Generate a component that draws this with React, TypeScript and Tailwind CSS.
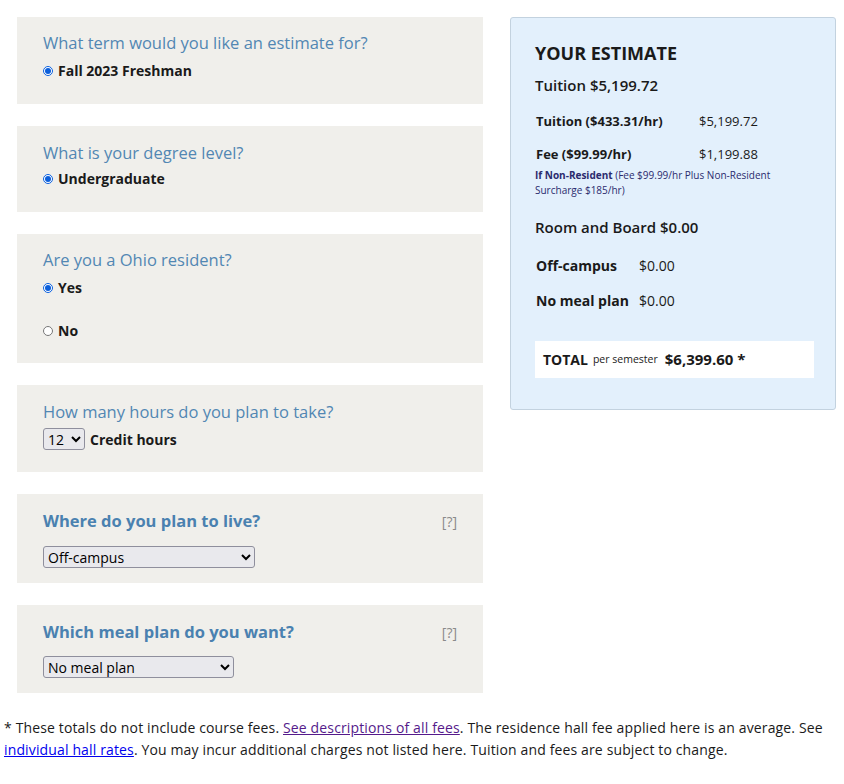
import React from "react";

function Radio({ checked }: { checked?: boolean }) {
  return (
    <input
      type="radio"
      readOnly
      checked={!!checked}
      className="m-0 mr-[5px] h-[10px] w-[10px] accent-[#0b5fdb]"
    />
  );
}

function Box({ children, className = "" }: { children: React.ReactNode; className?: string }) {
  return <div className={"bg-[#f0efeb] pl-[26px] pr-[26px] " + className}>{children}</div>;
}

export default function App() {
  return (
    <div className="w-[844px] h-[784px] bg-white text-[#1a1a1a]" style={{ fontFamily: '"Open Sans", sans-serif' }}>
      <div className="flex pt-[17px] pl-[17px]">
        <div className="w-[466px] flex flex-col gap-[22px]">
          <Box className="h-[87px] pt-[14px]">
            <div className="text-[16.5px] leading-[24px] text-[#5287b3]">What term would you like an estimate for?</div>
            <label className="flex items-center text-[14px] font-bold leading-[20px] mt-[6px]">
              <Radio checked />Fall 2023 Freshman
            </label>
          </Box>
          <Box className="h-[86px] pt-[15px]">
            <div className="text-[16.5px] leading-[24px] text-[#5287b3]">What is your degree level?</div>
            <label className="flex items-center text-[14px] font-bold leading-[20px] mt-[4px]">
              <Radio checked />Undergraduate
            </label>
          </Box>
          <Box className="h-[129px] pt-[14px]">
            <div className="text-[16.5px] leading-[24px] text-[#5287b3]">Are you a Ohio resident?</div>
            <label className="flex items-center text-[14px] font-bold leading-[20px] mt-[6px]">
              <Radio checked />Yes
            </label>
            <label className="flex items-center text-[14px] font-bold leading-[20px] mt-[23px]">
              <Radio />No
            </label>
          </Box>
          <Box className="h-[87px] pt-[15px]">
            <div className="text-[16.5px] leading-[24px] text-[#5287b3]">How many hours do you plan to take?</div>
            <div className="flex items-center mt-[4px]">
              <select
                defaultValue="12"
                className="h-[22px] w-[42px] bg-[#e9e9ed] border border-[#8f8f9d] rounded-[3px] text-[14px] text-black"
              >
                <option value="12">12</option>
              </select>
              <span className="ml-[5px] text-[14px] font-bold">Credit hours</span>
            </div>
          </Box>
          <Box className="h-[89px] pt-[15px]">
            <div className="flex justify-between items-center">
              <div className="text-[16.5px] leading-[24px] font-bold text-[#4a81b0]">Where do you plan to live?</div>
              <div className="text-[14px] text-[#8a8a8a]">[?]</div>
            </div>
            <select
              defaultValue="off"
              className="mt-[13px] h-[22px] w-[212px] bg-[#e9e9ed] border border-[#8f8f9d] rounded-[3px] text-[14px] text-black"
            >
              <option value="off">Off-campus</option>
            </select>
          </Box>
          <Box className="h-[88px] pt-[15px]">
            <div className="flex justify-between items-center">
              <div className="text-[16.5px] leading-[24px] font-bold text-[#4a81b0]">Which meal plan do you want?</div>
              <div className="text-[14px] text-[#8a8a8a]">[?]</div>
            </div>
            <select
              defaultValue="none"
              className="mt-[12px] h-[22px] w-[191px] bg-[#e9e9ed] border border-[#8f8f9d] rounded-[3px] text-[14px] text-black"
            >
              <option value="none">No meal plan</option>
            </select>
          </Box>
        </div>
        <div className="ml-[27px] w-[326px] h-[393px] bg-[#e3f0fc] border border-[#c3d2df] rounded-[3px] pl-[24px] pr-[21px] pt-[23px]">
          <div className="text-[18px] leading-[24px] font-bold text-[#1a1a1a]">YOUR ESTIMATE</div>
          <div className="mt-[10px] text-[15px] leading-[20px] font-semibold">Tuition $5,199.72</div>
          <div className="mt-[17px] flex text-[13px] leading-[18px]">
            <span className="w-[164px] font-bold pl-[1px]">Tuition ($433.31/hr)</span>
            <span>$5,199.72</span>
          </div>
          <div className="mt-[15px] flex text-[13px] leading-[18px]">
            <span className="w-[164px] font-bold pl-[1px]">Fee ($99.99/hr)</span>
            <span>$1,199.88</span>
          </div>
          <div className="mt-[5px] text-[10px] leading-[15px] text-[#2b2b6e] pr-[40px]">
            <span className="font-bold">If Non-Resident</span> (Fee $99.99/hr Plus Non-Resident Surcharge $185/hr)
          </div>
          <div className="mt-[19px] text-[15px] leading-[20px] font-semibold">Room and Board $0.00</div>
          <div className="mt-[19px] flex text-[14px] leading-[20px]">
            <span className="w-[104px] font-bold pl-[1px]">Off-campus</span>
            <span>$0.00</span>
          </div>
          <div className="mt-[15px] flex text-[14px] leading-[20px]">
            <span className="w-[104px] font-bold pl-[1px]">No meal plan</span>
            <span>$0.00</span>
          </div>
          <div className="mt-[30px] bg-white h-[37px] flex items-center pl-[8px]">
            <span className="text-[14px] font-bold">TOTAL</span>
            <span className="ml-[5px] text-[10.5px]">per semester</span>
            <span className="ml-[7px] text-[15px] font-bold">$6,399.60 *</span>
          </div>
        </div>
      </div>
      <div className="mt-[24px] pl-[4px] pr-[14px] text-[14px] leading-[22px] text-[#1a1a1a] tracking-[0.14px]">
        * These totals do not include course fees. <a href="#" className="underline text-[#551a8b]">See descriptions of all fees</a>. The residence hall fee applied here is an average. See{" "}
        <a href="#" className="underline text-[#0000ee]">individual hall rates</a>. You may incur additional charges not listed here. Tuition and fees are subject to change.
      </div>
    </div>
  );
}
